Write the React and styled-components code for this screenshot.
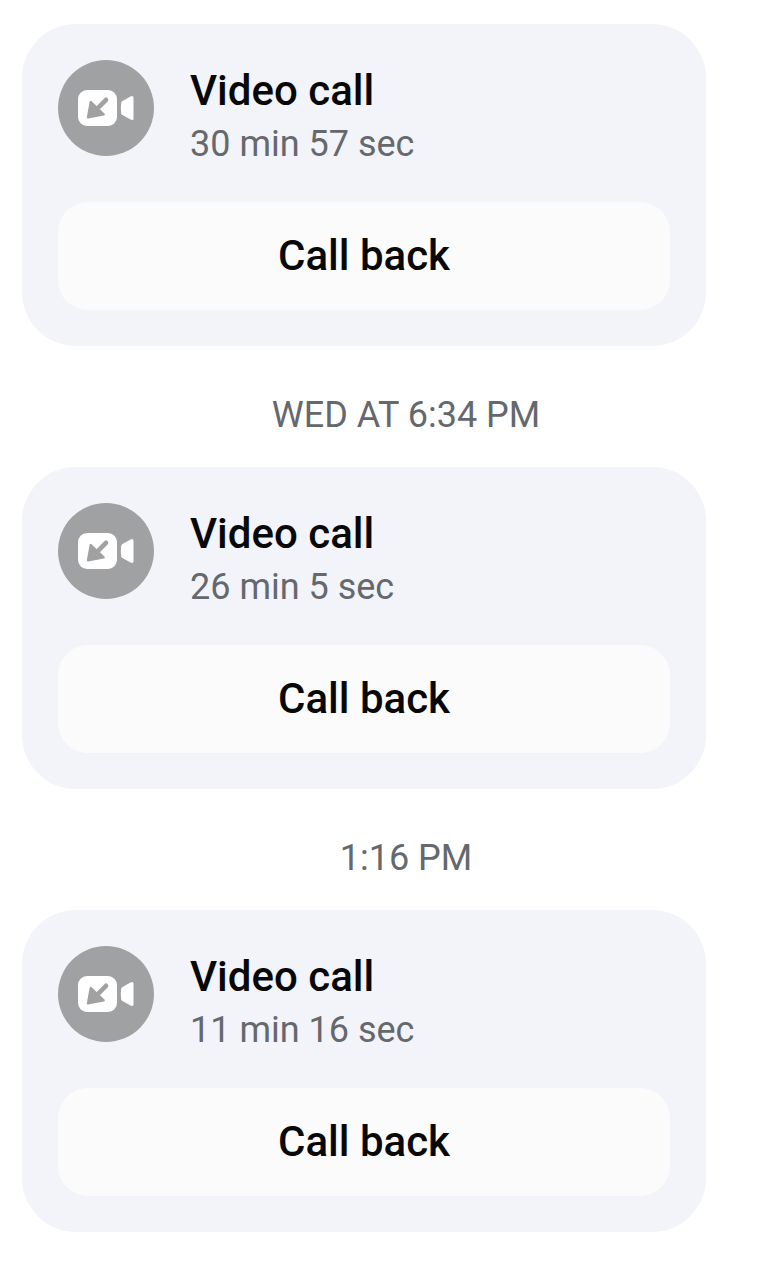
import React from "react";
import styled, { createGlobalStyle } from "styled-components";

const calls = [
  { id: 1, time: null, duration: "30 min 57 sec" },
  { id: 2, time: "WED AT 6:34 PM", duration: "26 min 5 sec" },
  { id: 3, time: "1:16 PM", duration: "11 min 16 sec" },
];

const GlobalStyle = createGlobalStyle`
  * {
    box-sizing: border-box;
  }
  body {
    margin: 0;
    background: #ffffff;
    font-family: Roboto, "Liberation Sans", sans-serif;
  }
`;

const Messages = styled.main`
  display: flex;
  flex-direction: column;
  padding: 24px 0 46px 22px;
`;

const Timestamp = styled.time`
  margin-left: 16px;
  padding: 47px 0 30px;
  text-align: center;
  font-size: 36px;
  line-height: 44px;
  color: #65686c;
`;

const CallCard = styled.article`
  margin-right: 68px;
  padding: 36px;
  border-radius: 54px;
  background: #f2f4f9;
`;

const CallHeader = styled.div`
  display: flex;
  gap: 36px;
  margin-bottom: 36px;
`;

const IconCircle = styled.div`
  display: flex;
  flex-shrink: 0;
  align-items: center;
  justify-content: center;
  width: 96px;
  height: 96px;
  border-radius: 50%;
  background: #a0a1a3;
`;

const CallInfo = styled.div`
  display: flex;
  flex-direction: column;
  gap: 4px;
  padding-top: 4px;
`;

const Title = styled.h2`
  margin: 0;
  font-size: 42px;
  font-weight: 500;
  line-height: 54px;
  color: #080809;
`;

const Duration = styled.p`
  margin: 0;
  font-size: 36px;
  line-height: 44px;
  color: #65686c;
`;

const CallBackButton = styled.button`
  display: block;
  width: 100%;
  height: 108px;
  padding: 0 0 2px;
  border: none;
  border-radius: 30px;
  background: #fbfbfc;
  font-family: inherit;
  font-size: 42px;
  font-weight: 500;
  color: #080809;
  cursor: pointer;
`;

function IncomingVideoIcon() {
  return (
    <svg width="56" height="36" viewBox="0 0 56 36" aria-hidden="true">
      <rect width="39" height="36" rx="9" fill="#ffffff" />
      <path
        d="M43.2 12.8 Q43.5 11.6 44.5 11 L52.5 6.4 Q55.5 5 55.5 7.8 V28.2 Q55.5 31 52.5 29.6 L44.5 25 Q43.5 24.4 43.2 23.2 Q42.4 18 43.2 12.8 Z"
        fill="#ffffff"
      />
      <path
        d="M28 9.8 L19 19"
        stroke="#a0a1a3"
        strokeWidth="4.6"
        strokeLinecap="round"
      />
      <path
        d="M12.8 12 L10 27.4 L25.6 24.4 Z"
        fill="#a0a1a3"
        stroke="#a0a1a3"
        strokeWidth="2.4"
        strokeLinejoin="round"
      />
    </svg>
  );
}

function VideoCall({ duration }) {
  return (
    <CallCard>
      <CallHeader>
        <IconCircle>
          <IncomingVideoIcon />
        </IconCircle>
        <CallInfo>
          <Title>Video call</Title>
          <Duration>{duration}</Duration>
        </CallInfo>
      </CallHeader>
      <CallBackButton type="button">Call back</CallBackButton>
    </CallCard>
  );
}

export default function App() {
  return (
    <>
      <GlobalStyle />
      <Messages>
        {calls.map((call) => (
          <React.Fragment key={call.id}>
            {call.time && <Timestamp>{call.time}</Timestamp>}
            <VideoCall duration={call.duration} />
          </React.Fragment>
        ))}
      </Messages>
    </>
  );
}
